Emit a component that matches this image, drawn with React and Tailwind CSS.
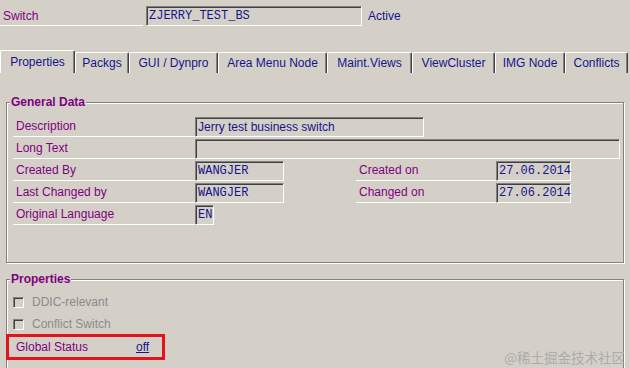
import React from "react";

const LABEL = "text-[#800080]";
const NAVY = "text-[#14148c]";

const tabs = [
  { name: "Properties", w: "w-[75px]", active: true },
  { name: "Packgs", w: "w-[54px]" },
  { name: "GUI / Dynpro", w: "w-[89px]" },
  { name: "Area Menu Node", w: "w-[109px]" },
  { name: "Maint.Views", w: "w-[85px]" },
  { name: "ViewCluster", w: "w-[83px]" },
  { name: "IMG Node", w: "w-[70px]" },
  { name: "Conflicts", w: "w-[63px]" },
];

// sunken read-only field
const Field = ({ className = "", mono = false, children }) => (
  <div
    className={`h-[20px] flex items-center border-t border-l border-[#808080] border-b border-r border-b-white border-r-white shadow-[inset_1px_1px_0_#404040] ${
      mono
        ? "pl-[2px] font-['Liberation_Mono',monospace] text-[12px]"
        : "pl-[2px] text-[12px]"
    } ${NAVY} ${className}`}
  >
    {children}
  </div>
);

const Label = ({ className = "", children }) => (
  <div
    className={`h-full flex items-center pl-[3px] border-b border-white ${LABEL} ${className}`}
  >
    {children}
  </div>
);

const Group = ({ title, className = "", children }) => (
  <fieldset
    className={`mx-[6px] border border-[#808080] shadow-[inset_1px_1px_0_#fff,1px_1px_0_#fff] ${className}`}
  >
    <legend className="ml-[3px] px-[1px] bg-[#d4d0c8] font-bold text-[12px] leading-[14px] text-[#800080]">
      {title}
    </legend>
    {children}
  </fieldset>
);

const Check = ({ children }) => (
  <div className="h-[22px] flex items-center">
    <div className="w-[11px] h-[11px] border-t border-l border-[#808080] border-b border-r border-b-white border-r-white shadow-[inset_1px_1px_0_#404040]" />
    <span className="ml-[8px] text-[#8a8a8a]">{children}</span>
  </div>
);

export default function App() {
  return (
    <div className="relative w-[630px] h-[368px] overflow-hidden bg-[#d4d0c8] font-['Liberation_Sans',Arial,sans-serif] text-[12px]">
      {/* header row */}
      <div className="flex items-end h-[20px] mt-[6px]">
        <div
          className={`w-[143px] h-full flex items-center pl-[3px] border-b border-white ${LABEL}`}
        >
          Switch
        </div>
        <Field mono className="ml-[3px] w-[216px]">
          ZJERRY_TEST_BS
        </Field>
        <div className={`ml-[6px] h-full flex items-center ${NAVY}`}>Active</div>
      </div>

      {/* tabs */}
      <div className="flex items-end h-[23px] mt-[24px]">
        {tabs.map((t) => (
          <div
            key={t.name}
            className={`${t.w} ${
              t.active ? "h-[23px] pb-[1px]" : "h-[21px]"
            } shrink-0 flex items-center justify-center rounded-t-[2px] border-t border-l border-white border-r border-r-[#404040] shadow-[inset_-1px_0_0_#808080] ${NAVY}`}
          >
            {t.name}
          </div>
        ))}
      </div>

      {/* general data */}
      <Group title="General Data" className="mt-[22px] h-[168px]">
        <div className="flex flex-col pl-[6px] pt-[6px]">
          <div className="flex items-end h-[22px]">
            <Label className="w-[182px]">Description</Label>
            <Field className="w-[229px]">Jerry test business switch</Field>
          </div>
          <div className="flex items-end h-[22px]">
            <Label className="w-[182px]">Long Text</Label>
            <Field className="w-[425px]" />
          </div>
          <div className="flex items-end h-[22px]">
            <Label className="w-[182px]">Created By</Label>
            <Field mono className="w-[89px]">
              WANGJER
            </Field>
            <Label className="ml-[72px] w-[140px]">Created on</Label>
            <Field mono className="w-[75px]">
              27.06.2014
            </Field>
          </div>
          <div className="flex items-end h-[22px]">
            <Label className="w-[182px]">Last Changed by</Label>
            <Field mono className="w-[89px]">
              WANGJER
            </Field>
            <Label className="ml-[72px] w-[140px]">Changed on</Label>
            <Field mono className="w-[75px]">
              27.06.2014
            </Field>
          </div>
          <div className="flex items-end h-[22px]">
            <Label className="w-[182px]">Original Language</Label>
            <Field mono className="w-[19px]">
              EN
            </Field>
          </div>
        </div>
      </Group>

      {/* properties */}
      <Group title="Properties" className="mt-[9px] h-[140px]">
        <div className="flex flex-col pl-[6px] pt-[5px]">
          <Check>DDIC-relevant</Check>
          <Check>Conflict Switch</Check>
          <div className="-ml-[7px] -mt-[1px] w-[159px] h-[26px] flex items-center border-[3px] border-[#e3131b] pl-[7px]">
            <span className={`w-[120px] ${LABEL}`}>Global Status</span>
            <span className={`underline ${NAVY}`}>off</span>
          </div>
        </div>
      </Group>

      <div className="absolute right-[5px] bottom-[3px] text-[13.5px] leading-[16px] text-[#ababab] font-['Noto_Sans_CJK_SC',sans-serif]">
        @稀土掘金技术社区
      </div>
    </div>
  );
}
